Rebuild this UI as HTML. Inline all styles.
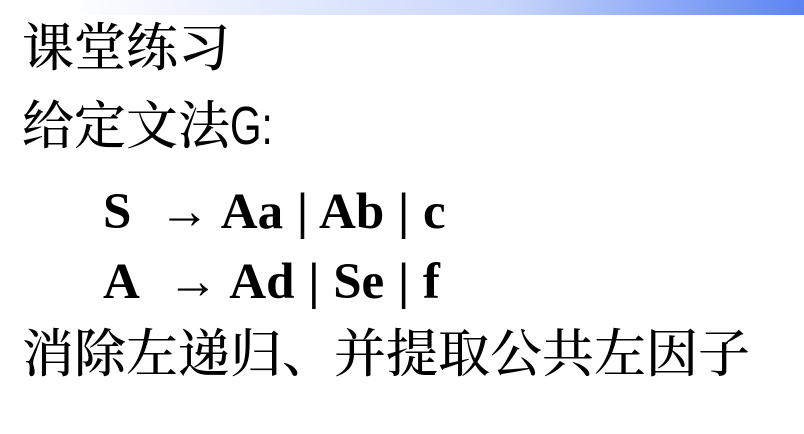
<!DOCTYPE html>
<html><head><meta charset="utf-8"><style>
body{margin:0;width:804px;height:434px;background:#fff;overflow:hidden;position:relative}
.bar{position:absolute;left:60px;top:0;width:744px;height:15px;background:linear-gradient(90deg,#fff,#c8d6fb 60%,#5b84f3)}
.c{position:absolute;left:22px;font-family:"Liberation Serif","Noto Serif CJK SC",serif;font-weight:500;font-size:52px;line-height:52px;color:#000;white-space:nowrap}
.c span{font-family:"Liberation Sans Narrow","Liberation Sans",sans-serif;font-weight:normal;display:inline-block;transform:scaleX(0.75);transform-origin:0 0;font-size:54px}
.m{position:absolute;left:103px;font-family:"Liberation Serif",serif;font-weight:bold;font-size:51px;line-height:50px;white-space:nowrap;word-spacing:1px}
</style></head><body>
<div class="bar"></div>
<div class="c" style="top:24px">课堂练习</div>
<div class="c" style="top:100px">给定文法<span>G:</span></div>
<div class="m" style="top:187px">S&nbsp; → Aa | Ab | c</div>
<div class="m" style="top:257px">A&nbsp; → Ad | Se | f</div>
<div class="c" style="top:330px">消除左递归、并提取公共左因子</div>
</body></html>
